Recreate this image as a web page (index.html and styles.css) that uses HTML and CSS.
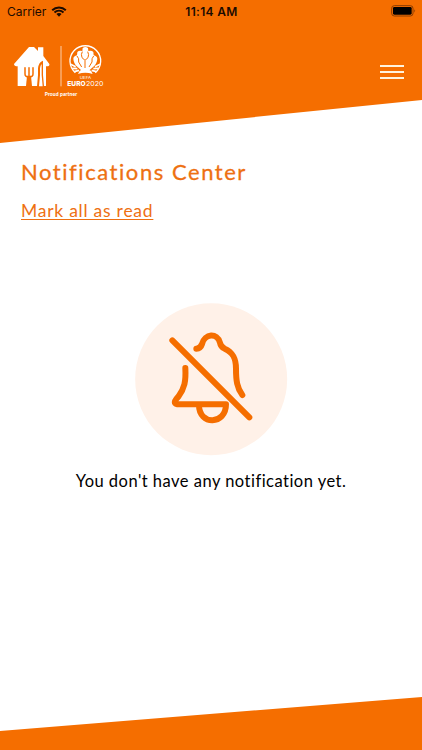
FILE: index.html
```html
<!DOCTYPE html>
<html lang="en">
<head>
    <meta charset="UTF-8">
    <meta name="viewport" content="width=device-width, initial-scale=1.0">
    <title>Notifications Center</title>
    <link rel="stylesheet" href="styles.css">
</head>
<body>
    <header class="header">
        <div class="status-bar">
            <div class="carrier">
                <span>Carrier</span>
                <svg class="wifi" viewBox="0 0 48 34">
                    <path d="M3 13a30 30 0 0 1 42 0M10 20a20 20 0 0 1 28 0" fill="none" stroke="#1c0b00" stroke-width="6"/>
                    <path d="M24 33l-8-8a11 11 0 0 1 16 0z" fill="#1c0b00"/>
                </svg>
            </div>
            <div class="time">11:14 AM</div>
            <svg class="battery" viewBox="0 0 75 36">
                <rect x="2" y="2" width="64" height="31" rx="8" fill="none" stroke="#8a3c00" stroke-width="3"/>
                <rect x="6" y="6" width="56" height="23" rx="4" fill="#000"/>
                <path d="M70 13q5 4 0 10z" fill="#8a3c00"/>
            </svg>
        </div>
        <div class="nav">
            <div class="brand">
                <svg class="logo" viewBox="0 0 330 156">
                    <!-- house -->
                    <path class="white" d="M72 27L87 27 99 39V28h16v26l18 24q2 7-8 7h-2v59H38V85q-11 0-11-7z"/>
                    <!-- fork and knife -->
                    <path d="M60 89v19q0 9 12 9t12-9V89M72 89v24" fill="none" stroke="#f56e00" stroke-width="4.500" stroke-linecap="round"/>
                    <path d="M66 113h12l3 32H63z" fill="#f56e00"/>
                    <path d="M96 145l3-34V91q2-19 15-23v43l3 34z" fill="#f56e00"/>
                    <path d="M102 145l3-34V91q1-9 5-13v33l3 34z" class="white"/>
                    <path d="M168 24v121" stroke="#fff" stroke-width="2"/>
                    <!-- cup badge -->
                    <path d="M211 104a46 46 0 1 1 60 0" fill="none" stroke="#fff" stroke-width="4"/>
                    <path class="white" d="M233 30q8-6 16 0l1 9q10-3 15 3l1 10q10 2 11 10-1 15-12 24l-11 10h-26l-11-10q-11-9-12-24 1-8 11-10l1-10q5-6 15-3z"/>
                    <path d="M232 41q-5 8-1 18l9 8 9-8q4-10-1-18M216 54q7 7 5 18l9 15M266 54q-7 7-5 18l-9 15M240 68v22" fill="none" stroke="#f56e00" stroke-width="3"/>
                    <path d="M197 79l15 7M202 91l15 1M208 101l14-4M285 79l-15 7M280 91l-15 1M274 101l-14-4" stroke="#fff" stroke-width="5"/>
                    <path d="M224 98q17-8 34 0l5 10q-22-8-44 0z" class="white"/>
                    <text class="uefa" x="241" y="122" text-anchor="middle" textLength="34" lengthAdjust="spacingAndGlyphs">UEFA</text>
                    <text class="euro" x="187" y="143" textLength="55" lengthAdjust="spacingAndGlyphs">EURO</text>
                    <text class="year" x="243" y="143" textLength="52" lengthAdjust="spacingAndGlyphs">2020</text>
                </svg>
                <div class="partner">Proud partner</div>
            </div>
            <div class="menu">
                <span></span>
                <span></span>
                <span></span>
            </div>
        </div>
    </header>

    <main class="content">
        <h1>Notifications Center</h1>
        <a class="mark-read" href="#">Mark all as read</a>
        <div class="empty">
            <svg class="bell" viewBox="0 0 459 459">
                <circle cx="228.500" cy="228.500" r="228" fill="#fff1e8"/>
                <g transform="translate(-3 -3)" fill="none" stroke="#f56e00" stroke-width="18" stroke-linecap="round" stroke-linejoin="round">
                    <path d="M115 115L346 346"/>
                    <path d="M187 140q13-1 17-14c8-32 46-34 54-4q2 12 14 18c25 11 34 29 34 60 0 35 3 58 19 79"/>
                    <path d="M154 198c2 40-2 60-21 86-17 18-12 23 4 23h139c0 63-81 63-81 3"/>
                </g>
            </svg>
            <p>You don't have any notification yet.</p>
        </div>
    </main>

    <footer class="footer"></footer>
</body>
</html>
```
FILE: styles.css
```css
body {
    margin: 0;
    height: 750px;
    display: flex;
    flex-direction: column;
    overflow: hidden;
    background-color: #fff;
    font-family: Lato, sans-serif;
}
.header {
    height: 143px;
    background-color: #f56e00;
    clip-path: polygon(0 0, 100% 0, 100% 100px, 0 100%);
}
.status-bar {
    height: 22px;
    padding: 0 6px 0 7px;
    display: grid;
    grid-template-columns: 1fr auto 1fr;
    align-items: center;
    font-family: Inter, sans-serif;
    font-size: 12px;
    color: #1c0b00;
}
.carrier {
    display: flex;
    align-items: center;
    gap: 5px;
}
.wifi {
    width: 16px;
    height: 11px;
}
.time {
    font-size: 12px;
    font-weight: 600;
    letter-spacing: 0.3px;
}
.battery {
    width: 25px;
    height: 12px;
    justify-self: end;
}
.nav {
    display: flex;
    justify-content: space-between;
    padding: 16px 18px 0 5px;
}
.brand {
    width: 110px;
}
.logo {
    display: block;
    width: 110px;
    height: 52px;
}
.white {
    fill: #fff;
}
.uefa, .euro, .year {
    fill: #fff;
    font-family: Inter, sans-serif;
    font-size: 20px;
}
.uefa {
    font-size: 12px;
}
.euro {
    font-weight: 800;
}
.partner {
    margin-left: 2px;
    font-size: 5px;
    line-height: 8px;
    font-weight: 900;
    letter-spacing: 0.1px;
    text-align: center;
    color: #fff;
}
.menu {
    display: flex;
    flex-direction: column;
    gap: 4px;
    padding-top: 27px;
}
.menu span {
    width: 24px;
    height: 2px;
    background-color: #fff3dc;
}
.content {
    flex: 1;
    padding: 15px 21px 0;
}
h1 {
    margin: 0;
    font-size: 22px;
    line-height: 28px;
    font-weight: 400;
    letter-spacing: 1.55px;
    white-space: nowrap;
    color: #ee7012;
    -webkit-text-stroke: 0.3px #ee7012;
}
.mark-read {
    display: block;
    width: fit-content;
    margin-top: 14px;
    font-size: 17.5px;
    line-height: 22px;
    letter-spacing: 0.75px;
    text-underline-offset: 2px;
    color: #ee7012;
}
.empty {
    display: flex;
    flex-direction: column;
    align-items: center;
    margin-top: 81px;
}
.bell {
    width: 153px;
    height: 153px;
}
p {
    margin: 14px 0 0;
    font-size: 16.5px;
    line-height: 22px;
    letter-spacing: 0.48px;
    white-space: nowrap;
    color: #000;
}
.footer {
    height: 53px;
    background-color: #f56e00;
    clip-path: polygon(0 34px, 100% 0, 100% 100%, 0 100%);
}
```
